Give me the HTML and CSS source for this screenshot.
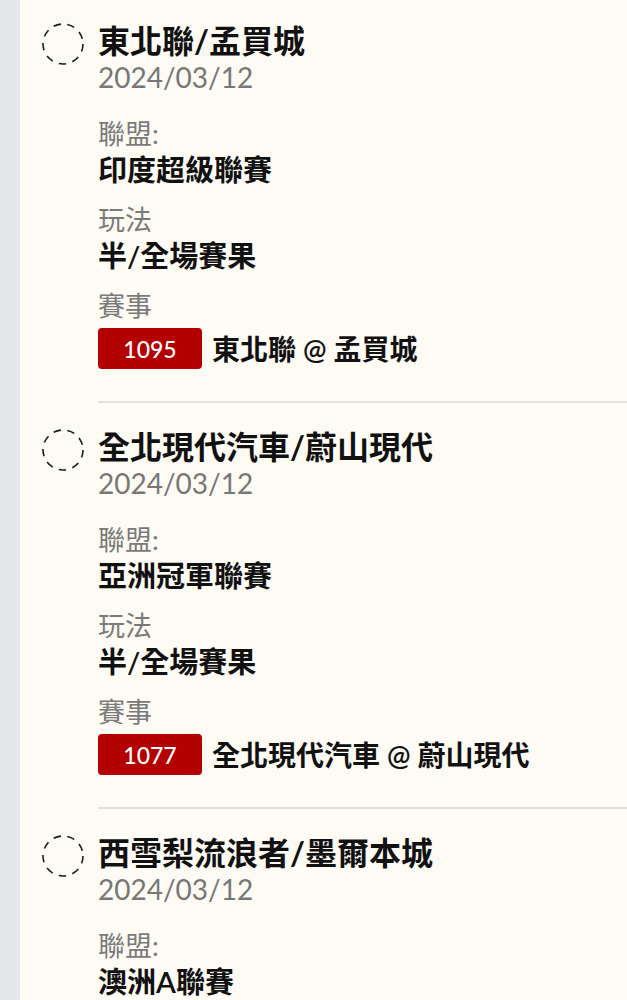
FILE: index.html
```html
<!DOCTYPE html>
<html>
<head>
	<meta charset="utf-8">
	<title>我的投注</title>
	<link rel="stylesheet" href="styles.css">
</head>
<body>
	<div class="page">
		<div class="rail"></div>
		<ul class="matches">
			<li class="match">
				<div class="check">
					<svg width="42" height="42" viewBox="0 0 42 42"><circle cx="21" cy="21" r="20" fill="none" stroke="#1a1a1a" stroke-width="1.6" stroke-dasharray="7.5 6.5"/></svg>
				</div>
				<div class="match-body">
					<h2 class="match-title">東北聯/孟買城</h2>
					<div class="match-date">2024/03/12</div>
					<dl class="fields">
						<div class="field">
							<dt>聯盟:</dt>
							<dd>印度超級聯賽</dd>
						</div>
						<div class="field">
							<dt>玩法</dt>
							<dd>半/全場賽果</dd>
						</div>
						<div class="field">
							<dt>賽事</dt>
							<dd class="event"><span class="event-no">1095</span>東北聯 @ 孟買城</dd>
						</div>
					</dl>
				</div>
			</li>
			<li class="match">
				<div class="check">
					<svg width="42" height="42" viewBox="0 0 42 42"><circle cx="21" cy="21" r="20" fill="none" stroke="#1a1a1a" stroke-width="1.6" stroke-dasharray="7.5 6.5"/></svg>
				</div>
				<div class="match-body">
					<h2 class="match-title">全北現代汽車/蔚山現代</h2>
					<div class="match-date">2024/03/12</div>
					<dl class="fields">
						<div class="field">
							<dt>聯盟:</dt>
							<dd>亞洲冠軍聯賽</dd>
						</div>
						<div class="field">
							<dt>玩法</dt>
							<dd>半/全場賽果</dd>
						</div>
						<div class="field">
							<dt>賽事</dt>
							<dd class="event"><span class="event-no">1077</span>全北現代汽車 @ 蔚山現代</dd>
						</div>
					</dl>
				</div>
			</li>
			<li class="match">
				<div class="check">
					<svg width="42" height="42" viewBox="0 0 42 42"><circle cx="21" cy="21" r="20" fill="none" stroke="#1a1a1a" stroke-width="1.6" stroke-dasharray="7.5 6.5"/></svg>
				</div>
				<div class="match-body">
					<h2 class="match-title">西雪梨流浪者/墨爾本城</h2>
					<div class="match-date">2024/03/12</div>
					<dl class="fields">
						<div class="field">
							<dt>聯盟:</dt>
							<dd>澳洲A聯賽</dd>
						</div>
						<div class="field">
							<dt>玩法</dt>
							<dd>半/全場賽果</dd>
						</div>
						<div class="field">
							<dt>賽事</dt>
							<dd class="event"><span class="event-no">1080</span>西雪梨流浪者 @ 墨爾本城</dd>
						</div>
					</dl>
				</div>
			</li>
		</ul>
	</div>
</body>
</html>
```

FILE: styles.css
```css
body {
	margin: 0;
	font-family: Lato, "Noto Sans CJK TC", sans-serif;
	background-color: #fdfbf3;
	color: #111;
}

.page {
	display: flex;
	min-height: 100vh;
}

.rail {
	width: 20px;
	flex-shrink: 0;
	background-color: #e6e7ea;
}

.matches {
	list-style: none;
	margin: 0;
	padding: 0;
	flex: 1;
}

.match {
	display: flex;
	gap: 14px;
	padding: 22px 0 0 22px;
}

.match + .match {
	padding-top: 25px;
}

.check {
	width: 42px;
	height: 42px;
	flex-shrink: 0;
	margin-top: 1px;
}

.check svg {
	display: block;
}

.match-body {
	flex: 1;
	padding-bottom: 32px;
	border-bottom: 2px solid #e3e1dc;
}

.match-title {
	margin: 0;
	font-size: 32px;
	line-height: 38px;
	font-weight: 700;
}

.match-date {
	font-size: 28px;
	line-height: 34px;
	color: #777;
}

.fields {
	margin: 22px 0 0;
}

.field + .field {
	margin-top: 14px;
}

.field dt {
	font-size: 27px;
	line-height: 36px;
	font-weight: 400;
	color: #7a7a7a;
}

.field dd {
	margin: 0;
	font-size: 29px;
	line-height: 36px;
	font-weight: 600;
}

.event {
	display: flex;
	align-items: center;
	gap: 10px;
	margin-top: 4px !important;
	font-size: 28px !important;
}

.event-no {
	display: flex;
	align-items: center;
	justify-content: center;
	width: 104px;
	height: 41px;
	border-radius: 4px;
	background-color: #b30000;
	color: #fff;
	font-size: 23px;
	font-weight: 500;
}
```
